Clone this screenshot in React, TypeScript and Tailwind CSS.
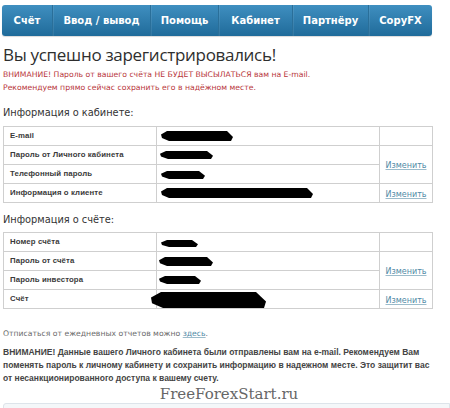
import React from "react";

const navItems = [
  { label: "Счёт", w: "w-[50px]" },
  { label: "Ввод / вывод", w: "w-[98px]" },
  { label: "Помощь", w: "w-[68px]" },
  { label: "Кабинет", w: "w-[74px]" },
  { label: "Партнёру", w: "w-[76px]" },
  { label: "CopyFX", w: "flex-1" },
];

function Blob({ x, y, w, h, slant = 6 }: { x: number; y: number; w: number; h: number; slant?: number }) {
  const pts = `0,${h * 0.35} ${slant},0 ${w - slant},0 ${w},${h * 0.6} ${w - 2},${h} ${slant + 2},${h} 1,${h * 0.7}`;
  return (
    <svg
      className="absolute pointer-events-none"
      style={{ left: x, top: y }}
      width={w}
      height={h}
      viewBox={`0 0 ${w} ${h}`}
    >
      <polygon points={pts} fill="#000" />
    </svg>
  );
}

type Row = { label: string; blob: { x: number; y: number; w: number; h: number; slant?: number } };

const labelFont = { fontFamily: '"Liberation Sans", Arial, sans-serif' };

function InfoTable({ rows }: { rows: Row[] }) {
  const td = "border border-[#cfcfcf] h-[19px] p-0 align-middle leading-[10px]";
  return (
    <table className="w-[429px] border-collapse border border-[#cfcfcf] table-fixed">
      <colgroup>
        <col className="w-[153px]" />
        <col className="w-[223px]" />
        <col className="w-[53px]" />
      </colgroup>
      <tbody>
        {rows.map((r, i) => (
          <tr key={i} className="h-[19px]">
            <td
              className={`${td} pl-[6px] text-[7.8px] font-bold text-[#3a3a3a] tracking-[0.1px]`}
              style={labelFont}
            >
              {r.label}
            </td>
            <td className={`${td} relative`}>
              <Blob {...r.blob} />
            </td>
            {i === 0 && <td className={td}></td>}
            {i === 1 && (
              <td rowSpan={2} className={`${td} text-center`}>
                <a className="text-[8px] text-[#4f8aa6] underline decoration-[#9cbccb]">Изменить</a>
              </td>
            )}
            {i === 3 && (
              <td className={`${td} text-center`}>
                <a className="text-[8px] text-[#4f8aa6] underline decoration-[#9cbccb]">Изменить</a>
              </td>
            )}
          </tr>
        ))}
      </tbody>
    </table>
  );
}

export default function App() {
  const t1: Row[] = [
    { label: "E-mail", blob: { x: 4, y: 4, w: 72, h: 10 } },
    { label: "Пароль от Личного кабинета", blob: { x: 3, y: 5, w: 53, h: 8 } },
    { label: "Телефонный пароль", blob: { x: 4, y: 6, w: 44, h: 8 } },
    { label: "Информация о клиенте", blob: { x: 4, y: 4, w: 152, h: 10 } },
  ];
  const t2: Row[] = [
    { label: "Номер счёта", blob: { x: 4, y: 7, w: 37, h: 7 } },
    { label: "Пароль от счёта", blob: { x: 2, y: 5, w: 54, h: 9 } },
    { label: "Пароль инвестора", blob: { x: 2, y: 5, w: 42, h: 8 } },
    { label: "Счёт", blob: { x: -6, y: 2, w: 115, h: 16, slant: 10 } },
  ];
  return (
    <div
      className="w-[450px] h-[408px] overflow-hidden bg-white pl-[3px] pt-[5px]"
      style={{ fontFamily: '"DejaVu Sans", Verdana, sans-serif' }}
    >
      <nav className="ml-[-1px] w-[430px] h-[31px] flex rounded-[3px] bg-gradient-to-b from-[#3f8fc0] to-[#1f6b9a] shadow-[0_1px_1px_rgba(0,0,0,0.15)] overflow-hidden">
        {navItems.map((n, i) => (
          <div
            key={n.label}
            className={`${n.w} h-full flex items-center justify-center text-white font-bold text-[10px] ${
              i > 0 ? "border-l border-[#2a6f99] shadow-[inset_1px_0_0_rgba(255,255,255,0.08)]" : ""
            }`}
          >
            {n.label}
          </div>
        ))}
      </nav>

      <h1
        className="mt-[7px] text-[17px] leading-[24px] tracking-[-0.3px] text-[#2e2e2e] font-normal"
        style={{ fontFamily: '"Open Sans", "DejaVu Sans", sans-serif' }}
      >
        Вы успешно зарегистрировались!
      </h1>

      <div className="mt-[1px] text-[7.7px] leading-[13px] text-[#b8363a]">
        <div>ВНИМАНИЕ! Пароль от вашего счёта НЕ БУДЕТ ВЫСЫЛАТЬСЯ вам на E-mail.</div>
        <div>Рекомендуем прямо сейчас сохранить его в надёжном месте.</div>
      </div>

      <div className="mt-[12px] text-[9.8px] leading-[14px] text-[#333]">Информация о кабинете:</div>
      <div className="mt-[6px]">
        <InfoTable rows={t1} />
      </div>

      <div className="mt-[10px] text-[9.8px] leading-[14px] text-[#333]">Информация о счёте:</div>
      <div className="mt-[5px]">
        <InfoTable rows={t2} />
      </div>

      <div className="mt-[18px] text-[7.7px] leading-[13px] text-[#6a6a6a]">
        Отписаться от ежедневных отчетов можно{" "}
        <a className="text-[#4f8aa6] underline decoration-[#9cbccb]">здесь</a>.
      </div>

      <div
        className="mt-[6px] w-[436px] text-[8.5px] leading-[13px] font-bold text-[#444]"
        style={labelFont}
      >
        ВНИМАНИЕ! Данные вашего Личного кабинета были отправлены вам на e-mail. Рекомендуем Вам поменять пароль к
        личному кабинету и сохранить информацию в надежном месте. Это защитит вас от несанкционированного доступа к
        вашему счету.
      </div>

      <div
        className="mt-[1px] text-center w-[450px] ml-[-3px] pl-[8px] text-[15px] leading-[16px] text-[#666]"
        style={{ fontFamily: '"DejaVu Serif", serif', fontWeight: 300 }}
      >
        FreeForexStart.ru
      </div>

      <div className="mt-[1px] h-[10px] w-[447px] border border-[#dde4ea] bg-[#f4f7f9] rounded-tl-[3px]"></div>
    </div>
  );
}
